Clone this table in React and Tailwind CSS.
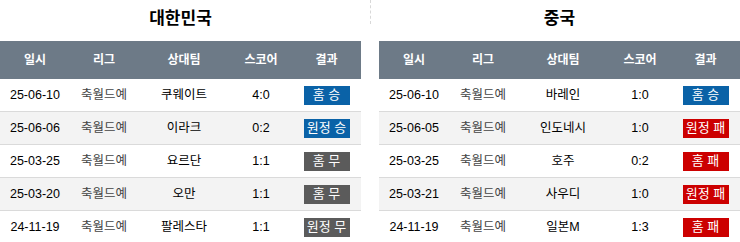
const korea = [
  { date: "25-06-10", league: "축월드예", team: "쿠웨이트", score: "4:0", result: "홈 승" },
  { date: "25-06-06", league: "축월드예", team: "이라크", score: "0:2", result: "원정 승" },
  { date: "25-03-25", league: "축월드예", team: "요르단", score: "1:1", result: "홈 무" },
  { date: "25-03-20", league: "축월드예", team: "오만", score: "1:1", result: "홈 무" },
  { date: "24-11-19", league: "축월드예", team: "팔레스타", score: "1:1", result: "원정 무" },
];

const china = [
  { date: "25-06-10", league: "축월드예", team: "바레인", score: "1:0", result: "홈 승" },
  { date: "25-06-05", league: "축월드예", team: "인도네시", score: "1:0", result: "원정 패" },
  { date: "25-03-25", league: "축월드예", team: "호주", score: "0:2", result: "홈 패" },
  { date: "25-03-21", league: "축월드예", team: "사우디", score: "1:0", result: "원정 패" },
  { date: "24-11-19", league: "축월드예", team: "일본M", score: "1:3", result: "홈 패" },
];

const cols = "grid grid-cols-[70px_68px_92px_62px_69px] items-center text-center";

const Badge = ({ text }) => {
  let color = "bg-[#0a62a7]";
  if (text.endsWith("무")) color = "bg-[#5b5b5b]";
  if (text.endsWith("패")) color = "bg-[#cc0000]";
  return (
    <span className={`mx-auto flex h-[19px] w-[46px] items-center justify-center text-[13px] text-white ${color}`}>
      {text}
    </span>
  );
};

const Table = ({ title, rows }) => (
  <div className="w-[361px]">
    <div className="flex h-[41px] items-center justify-center pb-1 text-[17px] font-bold text-black">{title}</div>
    <div className={`${cols} h-[38px] bg-[#6d7a87] text-[12px] font-bold text-white`}>
      <span>일시</span>
      <span>리그</span>
      <span>상대팀</span>
      <span>스코어</span>
      <span>결과</span>
    </div>
    {rows.map((r, i) => (
      <div
        key={r.date + r.team}
        className={`${cols} h-[33px] border-b border-[#dadada] text-[12.5px] ${i % 2 ? "bg-[#f3f3f3]" : "bg-white"}`}
      >
        <span className="text-black">{r.date}</span>
        <span className="text-[12.5px] text-[#444]">{r.league}</span>
        <span className="text-[12.5px] text-black">{r.team}</span>
        <span className="text-black">{r.score}</span>
        <Badge text={r.result} />
      </div>
    ))}
  </div>
);

export default function App() {
  return (
    <div
      className="h-[242px] w-[740px] overflow-hidden bg-white"
      style={{ fontFamily: '"Liberation Sans", Arial, "Noto Sans CJK KR", sans-serif' }}
    >
      <div className="flex">
        <Table title="대한민국" rows={korea} />
        <div className="flex w-[18px] justify-center">
          <div className="h-[24px] border-l border-dashed border-[#d8d8d8]" />
        </div>
        <Table title="중국" rows={china} />
      </div>
    </div>
  );
}
